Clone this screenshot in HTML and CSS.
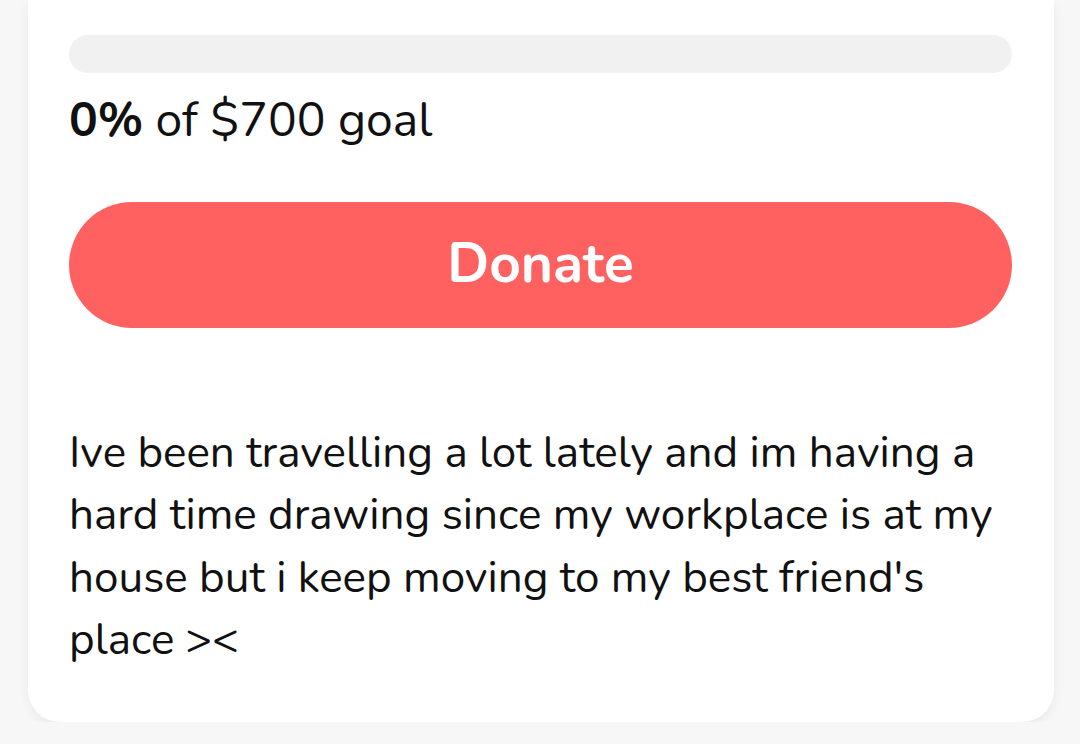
FILE: index.html
```html
<!DOCTYPE html>
<html lang="en">
<head>
    <meta charset="UTF-8">
    <meta name="viewport" content="width=device-width, initial-scale=1.0">
    <title>Donate</title>
    <link rel="stylesheet" href="styles.css">
</head>
<body>
    <div class="page">
        <!-- Goal card -->
        <div class="card">
            <div class="progress"><div class="progress-fill"></div></div>
            <p class="goal"><b>0%</b> of $700 goal</p>

            <button class="donate">Donate</button>

            <p class="story">Ive been travelling a lot lately and im having a hard time drawing since my workplace is at my house but i keep moving to my best friend's place &gt;&lt;</p>
        </div>
    </div>
</body>
</html>
```

FILE: styles.css
```css
* { box-sizing: border-box; }
body {
    margin: 0;
    padding: 0;
    font-family: 'Nunito', 'Lato', sans-serif;
    background-color: #f7f7f7;
    color: #111;
}
.page {
    padding: 0 26px 0 28px;
}
.card {
    background-color: #ffffff;
    border-radius: 0 0 32px 32px;
    box-shadow: 0 4px 12px rgba(0,0,0,0.06);
    padding: 35px 42px 51px 41px;
}
.progress {
    height: 38px;
    border-radius: 19px;
    background-color: #f1f1f1;
    overflow: hidden;
}
.progress-fill {
    width: 0;
    height: 100%;
}
.goal {
    margin: 17px 0 0;
    font-size: 48px;
    line-height: 60px;
}
.goal b { font-weight: 700; }
.donate {
    display: block;
    width: 100%;
    height: 126px;
    margin-top: 52px;
    padding: 0 0 4px;
    border: none;
    border-radius: 63px;
    background-color: #ff6160;
    color: #fff;
    font-family: inherit;
    font-size: 55px;
    font-weight: 700;
    cursor: pointer;
}
.story {
    margin: 94px 0 0;
    font-size: 44px;
    line-height: 62.3px;
}
```
